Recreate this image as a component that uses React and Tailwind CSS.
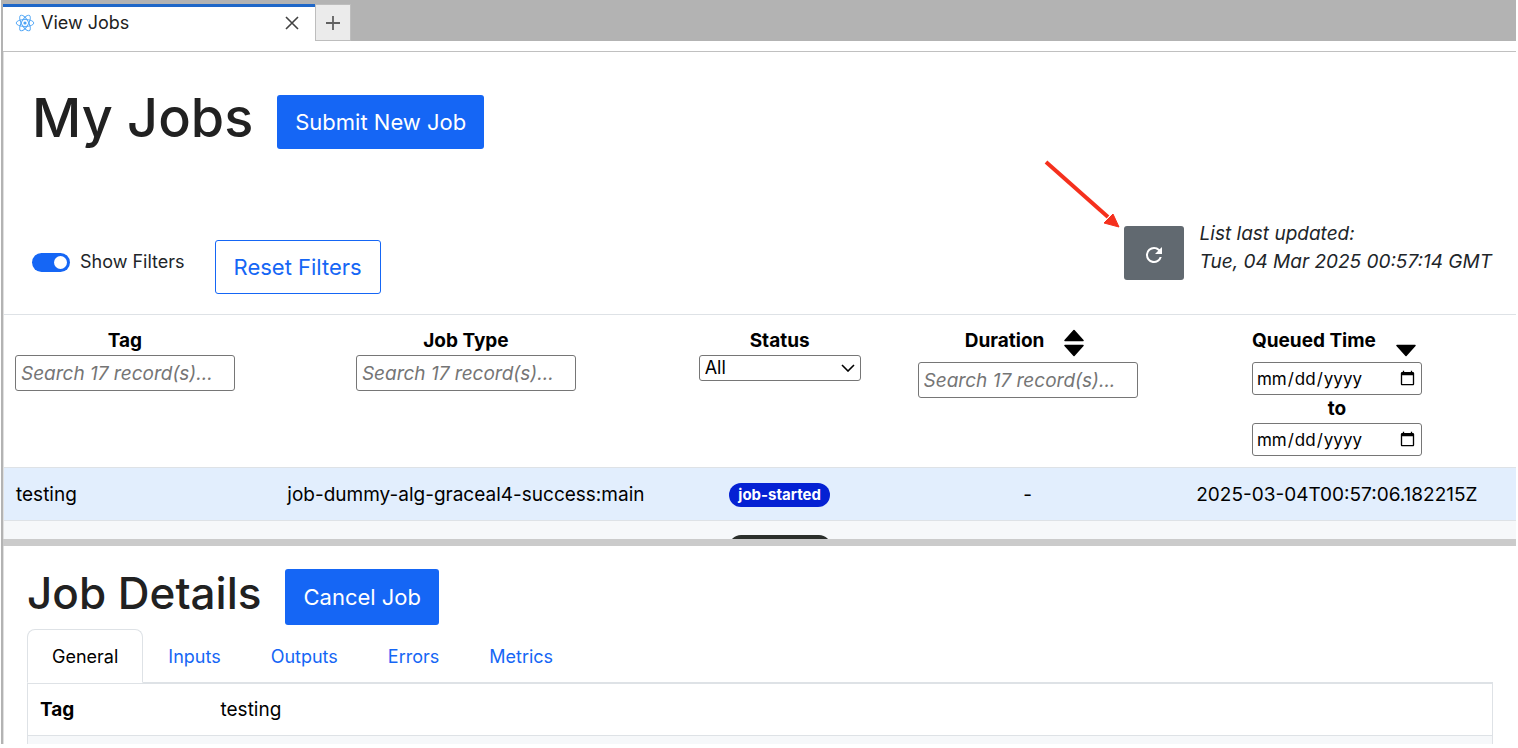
import { useState } from 'react';

const jobs = [
  {
    tag: 'testing',
    type: 'job-dummy-alg-graceal4-success:main',
    status: 'job-started',
    duration: '-',
    queued: '2025-03-04T00:57:06.182215Z'
  }
];

const tabs = ['General', 'Inputs', 'Outputs', 'Errors', 'Metrics'];

const ReactLogo = () => (
  <svg viewBox="0 0 20 20" className="w-5 h-5" fill="none" stroke="#4ba3f5" strokeWidth="0.9">
    <ellipse cx="10" cy="10" rx="8.8" ry="3.5" />
    <ellipse cx="10" cy="10" rx="8.8" ry="3.5" transform="rotate(60 10 10)" />
    <ellipse cx="10" cy="10" rx="8.8" ry="3.5" transform="rotate(120 10 10)" />
    <circle cx="10" cy="10" r="1.6" fill="#4ba3f5" stroke="none" />
  </svg>
);

const SortIcon = ({ up, down }) => (
  <svg viewBox="0 0 20 28" className="w-5 h-7" fill="#000" stroke="#000" strokeWidth="1.5" strokeLinejoin="round">
    {up && <path d="M1 11.5 10 1.5l9 10z" />}
    {down && <path d="M1 16.5h18l-9 10z" />}
  </svg>
);

const SearchInput = ({ label }) => (
  <input
    type="text"
    aria-label={`Search ${label}`}
    placeholder="Search 17 record(s)..."
    className="block mx-auto w-[220px] h-9 px-[5px] border border-[#767676] rounded-[3px] bg-white font-normal italic placeholder:text-[#757575]"
  />
);

const DateInput = ({ label }) => (
  <input
    type="date"
    aria-label={label}
    className="block mx-auto w-[170px] h-[33px] px-[3px] border border-[#767676] rounded-[3px] bg-white font-normal text-[17px]"
  />
);

const App = () => {
  const [showFilters, setShowFilters] = useState(true);
  const [activeTab, setActiveTab] = useState('General');

  return (
    <div className="h-screen pl-px pr-0.5 pb-1 bg-white font-['Inter','Liberation_Sans',sans-serif] text-[19px] leading-7 text-[#212529]">
      <div className="h-full flex flex-col border-l-2 border-[#b3b3b3] overflow-hidden">
        {/* Tab bar */}
        <div className="shrink-0 h-[52px] flex items-start bg-white border-b border-[#c0c0c0] text-[18px]">
          <div className="w-[312px] h-[41px] pt-1 bg-[#b3b3b3]">
            <div className="h-full flex items-center border-t-3 border-[#1f67c8] bg-white pl-3 pr-4 pb-0.5">
              <ReactLogo />
              <span className="ml-1.5 flex-1 text-[#212121]">View Jobs</span>
              <button type="button" aria-label="Close tab">
                <svg viewBox="0 0 14 14" className="w-3.5 h-3.5" stroke="#424242" strokeWidth="1.6">
                  <path d="M1 1l12 12M13 1 1 13" />
                </svg>
              </button>
            </div>
          </div>
          <div className="flex-1 h-[41px] pt-1 bg-[#b3b3b3]">
            <button
              type="button"
              aria-label="New tab"
              className="w-9 h-[37px] flex items-center justify-center bg-[#ebebeb] border border-[#bdbdbd]"
            >
              <svg viewBox="0 0 14 14" className="w-3.5 h-3.5" stroke="#616161" strokeWidth="1.8">
                <path d="M7 0v14M0 7h14" />
              </svg>
            </button>
          </div>
        </div>

        {/* Jobs panel */}
        <section className="flex-[32_1_0%] min-h-0 overflow-hidden border-l border-[#e0e0e0]">
          <div className="flex items-center gap-6 pl-7 pt-8">
            <h1 className="text-[54px] leading-[68px] font-medium text-[#212121]">My Jobs</h1>
            <button type="button" className="mt-2 h-[54px] px-[18px] rounded-[3px] bg-[#1566f5] text-white text-[22px]">
              Submit New Job
            </button>
          </div>

          <div className="mt-[68px] flex items-start justify-between pl-7 pr-6 pb-5">
            <div className="flex items-start">
              <label className="mt-7 flex items-center gap-2.5 text-[18px]">
                <input
                  type="checkbox"
                  role="switch"
                  checked={showFilters}
                  onChange={(e) => setShowFilters(e.target.checked)}
                  className="appearance-none w-[38px] h-[19px] p-[3px] flex justify-start checked:justify-end rounded-full bg-[#adb5bd] checked:bg-[#1566f5] before:w-[13px] before:h-[13px] before:rounded-full before:bg-white"
                />
                Show Filters
              </label>
              <button
                type="button"
                className="mt-5 ml-[30px] h-[54px] px-[18px] rounded-[3px] border border-[#1566f5] text-[#1566f5] text-[22px]"
              >
                Reset Filters
              </button>
            </div>
            <div className="flex items-start gap-4">
              <div className="relative mt-1.5">
                <svg viewBox="0 0 80 72" className="absolute -left-20 -top-[66px] w-20 h-[72px]">
                  <path d="M2 2 64 57" stroke="#f5301d" strokeWidth="4" />
                  <path d="M75 67 69 54 60 63z" fill="#f5301d" stroke="#f5301d" />
                </svg>
                <button
                  type="button"
                  aria-label="Refresh job list"
                  className="w-[60px] h-[54px] flex items-center justify-center rounded-[3px] bg-[#616970]"
                >
                  <svg viewBox="0 0 24 24" className="w-6 h-6 mt-1" fill="#fff">
                    <path d="M17.65 6.35A7.96 7.96 0 0 0 12 4a8 8 0 1 0 7.73 10h-2.08A6 6 0 1 1 12 6c1.66 0 3.14.69 4.22 1.78L13 11h7V4z" />
                  </svg>
                </button>
              </div>
              <p className="italic">
                List last updated:
                <br />
                Tue, 04 Mar 2025 00:57:14 GMT
              </p>
            </div>
          </div>

          <table className="w-full table-fixed text-black">
            <colgroup>
              <col className="w-[16%]" />
              <col className="w-[29.1%]" />
              <col className="w-[12.4%]" />
              <col className="w-[20.4%]" />
              <col />
            </colgroup>
            <thead>
              <tr className="border-y border-[#dee2e6] align-top">
                <th className="pt-3 pb-[11px]">
                  Tag
                  {showFilters && <SearchInput label="Tag" />}
                </th>
                <th className="pt-3 pb-[11px]">
                  Job Type
                  {showFilters && <SearchInput label="Job Type" />}
                </th>
                <th className="pt-3 pb-[11px]">
                  Status
                  {showFilters && (
                    <div className="relative mx-auto w-[162px]">
                      <select
                        aria-label="Filter Status"
                        className="block appearance-none w-full h-[26px] px-[5px] border border-[#767676] rounded-[3px] bg-white font-normal text-[18px] leading-6"
                      >
                        <option>All</option>
                      </select>
                      <svg viewBox="0 0 14 8" className="absolute right-1.5 top-[9px] w-3.5 h-2 pointer-events-none" fill="none" stroke="#000" strokeWidth="1.6">
                        <path d="M1 1l6 6 6-6" />
                      </svg>
                    </div>
                  )}
                </th>
                <th className="pt-3 pb-[11px]">
                  <div className="flex items-start justify-center gap-5 pr-1.5 h-[35px]">
                    Duration
                    <button type="button" aria-label="Sort by Duration" className="mt-0.5">
                      <SortIcon up down />
                    </button>
                  </div>
                  {showFilters && <SearchInput label="Duration" />}
                </th>
                <th className="pt-3 pb-[11px] pr-6">
                  <div className="flex items-start justify-center gap-5 pr-1.5 h-[35px]">
                    Queued Time
                    <button type="button" aria-label="Sort by Queued Time" className="mt-0.5">
                      <SortIcon down />
                    </button>
                  </div>
                  {showFilters && (
                    <>
                      <DateInput label="Queued from" />
                      to
                      <DateInput label="Queued until" />
                    </>
                  )}
                </th>
              </tr>
            </thead>
            <tbody>
              {jobs.map((job) => (
                <tr key={job.queued} className="bg-[#e2eefd] border-b border-[#dee2e6] text-center">
                  <td className="px-3 pt-[13px] pb-[11px] text-left">{job.tag}</td>
                  <td className="pt-[13px] pb-[11px]">{job.type}</td>
                  <td className="pt-[13px] pb-[11px]">
                    <span className="block mx-auto w-fit h-6 px-[9px] rounded-full bg-[#0521d3] text-white text-[15px] leading-6 font-bold">
                      {job.status}
                    </span>
                  </td>
                  <td className="pt-[13px] pb-[11px]">{job.duration}</td>
                  <td className="pt-[13px] pb-[11px] pr-6">{job.queued}</td>
                </tr>
              ))}
              <tr className="bg-[#f6f8fa]">
                <td colSpan={2} className="h-[52px]"></td>
                <td className="py-3">
                  <span className="block mx-auto w-[102px] h-6 rounded-full bg-[#2b2f2b]"></span>
                </td>
                <td colSpan={2}></td>
              </tr>
            </tbody>
          </table>
        </section>

        <div className="shrink-0 h-[7px] bg-[#cbcbcb]"></div>

        {/* Details panel */}
        <section className="flex-[13_1_0%] min-h-0 overflow-hidden border-l border-[#e0e0e0] px-[23px]">
          <div className="flex items-start gap-6 pt-[19px]">
            <h2 className="text-[44px] leading-[56px] font-medium text-[#212121]">Job Details</h2>
            <button type="button" className="mt-1 h-14 px-[18px] rounded-[3px] bg-[#1566f5] text-white text-[22px]">
              Cancel Job
            </button>
          </div>

          <div role="tablist" className="mt-1 flex border-b border-[#dee2e6] text-[18px]">
            {tabs.map((tab) => (
              <button
                key={tab}
                type="button"
                role="tab"
                aria-selected={activeTab === tab}
                onClick={() => setActiveTab(tab)}
                className={`h-[54px] -mb-px px-6 pt-0.5 border rounded-t-lg ${
                  activeTab === tab
                    ? 'border-[#dee2e6] border-b-white bg-white text-black'
                    : 'border-transparent text-[#1566f5]'
                }`}
              >
                {tab}
              </button>
            ))}
          </div>

          <table className="w-full border border-[#dee2e6] text-black">
            <tbody>
              <tr className="border-b border-[#dee2e6]">
                <th className="w-[181px] px-3 pt-3 pb-[11px] text-left">Tag</th>
                <td className="px-3 pt-3 pb-[11px]">testing</td>
              </tr>
              <tr className="bg-[#f6f8fa]">
                <td colSpan={2} className="h-[52px]"></td>
              </tr>
            </tbody>
          </table>
        </section>
      </div>
    </div>
  );
};

export default App;
